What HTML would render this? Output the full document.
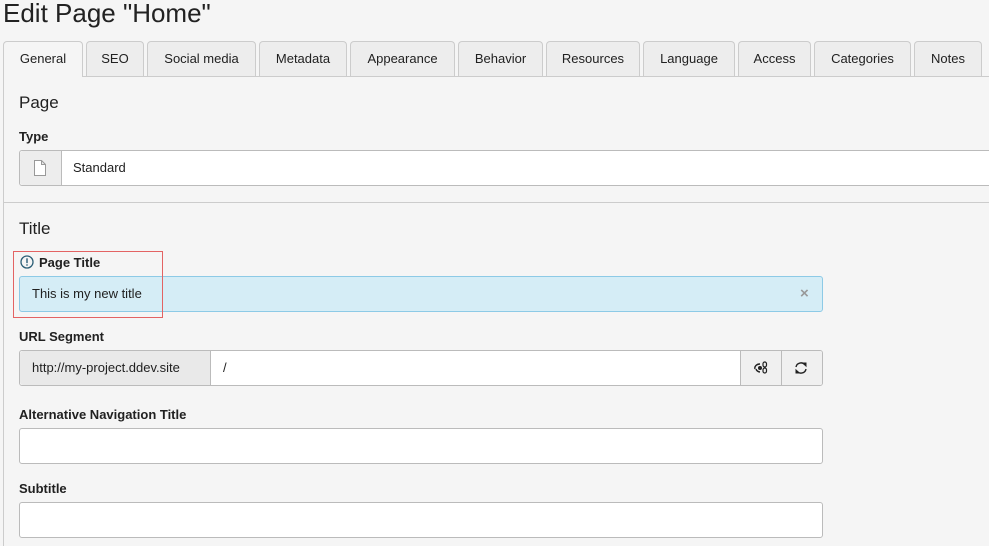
<!DOCTYPE html>
<html><head><style>
body{margin:0;width:989px;height:545px;overflow:hidden;background:#f5f5f5;font-family:"Liberation Sans",Verdana,sans-serif;color:#212121;position:relative}
.abs{position:absolute}
h1{position:absolute;left:3px;top:-2px;margin:0;font-weight:normal;font-size:26px;color:#222}
.tab{position:absolute;top:41px;background:#ededed;border:1px solid #ccc;border-bottom:none;border-radius:4px 4px 0 0;font-size:13px;line-height:34px;text-align:center;box-sizing:border-box;height:35px}
.tab.act{background:#f5f5f5;height:36px}
.lbl{position:absolute;left:19px;font-size:13px;font-weight:bold}
.h2{position:absolute;left:19px;font-size:17px}
.inp{position:absolute;background:#fff;border:1px solid #bbb;border-radius:3px;box-sizing:border-box;font-size:13px}
</style></head><body>
<h1>Edit Page "Home"</h1>
<div class="abs" style="left:3px;top:76px;width:990px;height:1px;background:#ccc"></div>
<div class="abs" style="left:3px;top:76px;width:1px;height:470px;background:#ccc"></div>
<div class="tab act" style="left:3px;width:80px">General</div>
<div class="tab" style="left:86px;width:58px">SEO</div>
<div class="tab" style="left:147px;width:109px">Social media</div>
<div class="tab" style="left:259px;width:88px">Metadata</div>
<div class="tab" style="left:350px;width:105px">Appearance</div>
<div class="tab" style="left:458px;width:85px">Behavior</div>
<div class="tab" style="left:546px;width:94px">Resources</div>
<div class="tab" style="left:643px;width:92px">Language</div>
<div class="tab" style="left:738px;width:73px">Access</div>
<div class="tab" style="left:814px;width:97px">Categories</div>
<div class="tab" style="left:914px;width:68px">Notes</div>

<div class="h2" style="top:93px">Page</div>
<div class="lbl" style="top:129px">Type</div>
<div class="inp" style="left:19px;top:150px;width:980px;height:36px">
 <div class="abs" style="left:0;top:0;width:41px;height:34px;background:#ededed;border-right:1px solid #bbb;border-radius:3px 0 0 3px"></div>
 <svg class="abs" style="left:14px;top:9px" width="12" height="16" viewBox="0 0 12 16"><path d="M0.5 0.5h7l4 4v11h-11z M7.5 0.5v4h4" fill="#fff" stroke="#999"/></svg>
 <div class="abs" style="left:53px;top:9px">Standard</div>
</div>
<div class="abs" style="left:4px;top:202px;width:990px;height:1px;background:#ccc"></div>
<div class="h2" style="top:219px">Title</div>
<svg class="abs" style="left:20px;top:255px" width="14" height="14" viewBox="0 0 14 14"><circle cx="7" cy="7" r="6" fill="none" stroke="#2a5d75" stroke-width="1.3"/><rect x="6.3" y="3.3" width="1.4" height="4.8" fill="#2a5d75"/><rect x="6.3" y="9.3" width="1.4" height="1.4" fill="#2a5d75"/></svg>
<div class="lbl" style="left:39px;top:255px">Page Title</div>
<div class="inp" style="left:19px;top:276px;width:804px;height:36px;background:#d5edf6;border-color:#8dcae6">
 <div class="abs" style="left:12px;top:9px">This is my new title</div>
 <div class="abs" style="left:780px;top:8px;color:#999;font-size:15px;font-weight:bold">×</div>
</div>
<div class="abs" style="left:13px;top:251px;width:148px;height:65px;border:1px solid #e36363"></div>
<div class="lbl" style="top:329px">URL Segment</div>
<div class="inp" style="left:19px;top:350px;width:804px;height:36px">
 <div class="abs" style="left:0;top:0;width:190px;height:34px;background:#e9e9e9;border-right:1px solid #bbb;border-radius:3px 0 0 3px"></div>
 <div class="abs" style="left:12px;top:9px">http://my-project.ddev.site</div>
 <div class="abs" style="left:203px;top:9px">/</div>
 <div class="abs" style="left:720px;top:0;width:81px;height:34px;background:#f0f0f0;border-left:1px solid #bbb;border-radius:0 2px 2px 0"></div>
 <div class="abs" style="left:761px;top:0;width:1px;height:34px;background:#bbb"></div>
 <svg class="abs" style="left:734px;top:10px" width="16" height="14" viewBox="0 0 16 14"><path d="M6 3a5 4 0 0 0-5 5M6 11a5 4 0 0 1-4-3" fill="none" stroke="#222" stroke-width="1.4"/><circle cx="6" cy="7" r="2" fill="#222"/><rect x="9" y="1" width="3.5" height="5" rx="1.7" fill="none" stroke="#222" stroke-width="1.2"/><rect x="9" y="7" width="3.5" height="5" rx="1.7" fill="none" stroke="#222" stroke-width="1.2"/></svg>
 <svg class="abs" style="left:774px;top:10px" width="14" height="14" viewBox="0 0 14 14"><path d="M2 6a5 5 0 0 1 9-2M12 8a5 5 0 0 1-9 2" fill="none" stroke="#222" stroke-width="1.4"/><path d="M9 2l3 0 0 3z M5 12l-3 0 0-3z" fill="#222" stroke="#222"/></svg>
</div>
<div class="lbl" style="top:407px">Alternative Navigation Title</div>
<div class="inp" style="left:19px;top:428px;width:804px;height:36px"></div>
<div class="lbl" style="top:481px">Subtitle</div>
<div class="inp" style="left:19px;top:502px;width:804px;height:36px"></div>
</body></html>
